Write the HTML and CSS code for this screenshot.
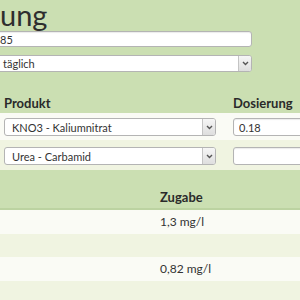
FILE: index.html
```html
<!DOCTYPE html>
<html lang="de">
<head>
    <meta charset="UTF-8">
    <title>Düngung</title>
    <link rel="stylesheet" href="styles.css">
</head>
<body>
    <!-- Kopfbereich -->
    <div class="form">
        <h1>ung</h1>
        <input class="field wide" type="text" value="85">
        <div class="select wide top-select">
            <span class="select-text">täglich</span>
            <span class="select-arrow"><svg width="7" height="5" viewBox="0 0 7 5"><path d="M1 1l2.5 2.5L6 1" fill="none" stroke="#555" stroke-width="1.4"/></svg></span>
        </div>
    </div>

    <!-- Produkte -->
    <div class="products">
        <div class="prod-row prod-head">
            <div class="cell">Produkt</div>
            <div class="cell">Dosierung</div>
        </div>
        <div class="prod-row odd first">
            <div class="cell">
                <div class="select">
                    <span class="select-text">KNO3 - Kaliumnitrat</span>
                    <span class="select-arrow"><svg width="7" height="5" viewBox="0 0 7 5"><path d="M1 1l2.5 2.5L6 1" fill="none" stroke="#555" stroke-width="1.4"/></svg></span>
                </div>
            </div>
            <div class="cell"><input class="field" type="text" value="0.18"></div>
        </div>
        <div class="prod-row even second">
            <div class="cell">
                <div class="select">
                    <span class="select-text">Urea - Carbamid</span>
                    <span class="select-arrow"><svg width="7" height="5" viewBox="0 0 7 5"><path d="M1 1l2.5 2.5L6 1" fill="none" stroke="#555" stroke-width="1.4"/></svg></span>
                </div>
            </div>
            <div class="cell"><input class="field" type="text" value=""></div>
        </div>
    </div>

    <!-- Ergebnis -->
    <div class="result">
        <div class="res-row res-head">
            <div class="cell"></div>
            <div class="cell">Zugabe</div>
        </div>
        <div class="res-row odd">
            <div class="cell"></div>
            <div class="cell">1,3 mg/l</div>
        </div>
        <div class="res-row even">
            <div class="cell"></div>
            <div class="cell"></div>
        </div>
        <div class="res-row odd">
            <div class="cell"></div>
            <div class="cell">0,82 mg/l</div>
        </div>
        <div class="res-row even">
            <div class="cell"></div>
            <div class="cell"></div>
        </div>
    </div>
</body>
</html>
```

FILE: styles.css
```css
* {
    margin: 0;
    padding: 0;
    box-sizing: border-box;
}

body {
    font-family: Lato, 'Open Sans', sans-serif;
    background: #cbdfb2;
    color: #333;
    width: 300px;
    height: 300px;
    overflow: hidden;
}

/* Kopfbereich */
.form h1 {
    font-size: 29px;
    font-weight: 400;
    line-height: 30px;
    height: 30px;
    color: #2e2e2e;
}

.field {
    display: block;
    height: 16px;
    border: 1px solid #b4b4b4;
    border-radius: 3px;
    background: #fff;
    box-shadow: inset 0 1px 1px rgba(0,0,0,0.08);
    font-family: inherit;
    font-size: 11px;
    color: #333;
    padding: 0 5px;
    outline: none;
}

.wide {
    width: 258px;
    margin-left: -6px;
}

.form .field {
    margin-top: 1px;
}

.select {
    display: flex;
    align-items: center;
    height: 18px;
    border: 1px solid #b4b4b4;
    border-radius: 3px;
    background: #fff;
    font-size: 11px;
    overflow: hidden;
}

.select-text {
    flex: 1;
    padding-left: 7px;
    white-space: nowrap;
}

.select-arrow {
    width: 13px;
    height: 100%;
    border-left: 1px solid #c4c4c4;
    background: linear-gradient(#f6f6f6, #dedede);
    display: flex;
    align-items: center;
    justify-content: center;
}

.top-select {
    margin-top: 8px;
    height: 17px;
}

.top-select .select-text {
    padding-left: 8px;
}

/* Produkte */
.prod-row {
    display: grid;
    grid-template-columns: 228px 1fr;
}

.prod-head {
    padding-top: 23px;
    padding-bottom: 2px;
    font-size: 13px;
    font-weight: 700;
    line-height: 16px;
    color: #2a2a2a;
}

.prod-head .cell {
    padding-left: 4px;
}

.prod-head .cell + .cell {
    padding-left: 3px;
}

.products .cell {
    padding-right: 12px;
}

.products .cell:first-child {
    padding-left: 4px;
}

.products .cell + .cell {
    padding-left: 5px;
    padding-right: 0;
}

.products .field {
    width: 90px;
    height: 18px;
}

.first {
    height: 27px;
    padding-top: 5px;
}

.second {
    height: 30px;
    padding-top: 7px;
}

.odd {
    background: #fafbf5;
}

.even {
    background: #f0f4e1;
}

/* Ergebnis */
.res-row {
    display: grid;
    grid-template-columns: 160px 1fr;
    font-size: 12px;
    line-height: 16px;
    height: 24px;
    align-items: center;
}

.res-row.even {
    height: 23px;
}

.res-head {
    height: 40px;
    padding-top: 19px;
    align-items: start;
    font-size: 13px;
    font-weight: 700;
    color: #2a2a2a;
    background: #cbdfb2;
    border-bottom: 2px solid #bcd3a1;
}
```
